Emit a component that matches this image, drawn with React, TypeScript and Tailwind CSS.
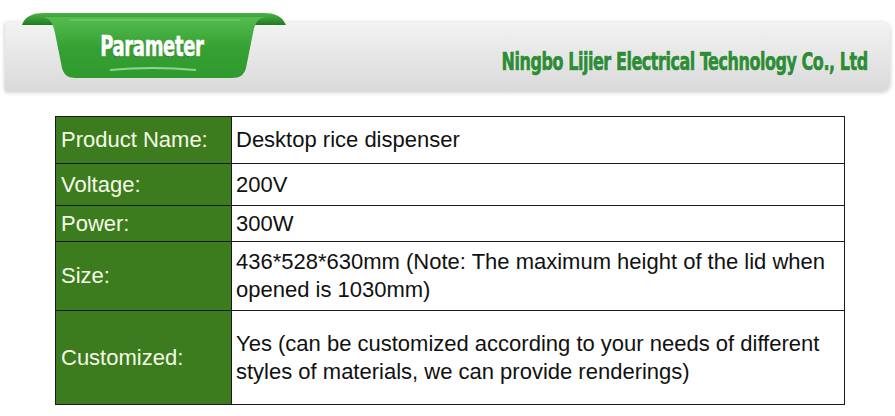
import React from "react";

const rows: { label: string; h: string; value: React.ReactNode }[] = [
  { label: "Product Name:", h: "h-[47px]", value: "Desktop rice dispenser" },
  { label: "Voltage:", h: "h-[42px]", value: "200V" },
  { label: "Power:", h: "h-[36px]", value: "300W" },
  {
    label: "Size:",
    h: "h-[69px]",
    value: (
      <>
        436*528*630mm (Note: The maximum height of the lid when
        <br />
        opened is 1030mm)
      </>
    ),
  },
  {
    label: "Customized:",
    h: "h-[94px]",
    value: (
      <>
        Yes (can be customized according to your needs of different
        <br />
        styles of materials, we can provide renderings)
      </>
    ),
  },
];

function Ribbon() {
  return (
    <div className="absolute left-0 top-0 flex h-[90px] w-[300px] justify-center pl-[4px] pt-[29px]">
      <svg width="300" height="90" viewBox="0 0 300 90" className="absolute left-0 top-0">
        <defs>
          <linearGradient id="rb" x1="0" y1="0" x2="0" y2="1">
            <stop offset="0" stopColor="#55bd4f" />
            <stop offset="0.5" stopColor="#36a033" />
            <stop offset="1" stopColor="#2f9a2d" />
          </linearGradient>
          <linearGradient id="curl" x1="0" y1="0" x2="0" y2="1">
            <stop offset="0" stopColor="#4db447" />
            <stop offset="1" stopColor="#1f7a1f" />
          </linearGradient>
        </defs>
        <path d="M22 25 C25 16 33 13 44 13 L264 13 C275 13 282 16 286 25 L22 25 Z" fill="url(#curl)" />
        <path
          d="M40 17 C50 17 53 23 55 33 L62 68 C64 75 68 78 76 78 L232 78 C240 78 244 75 246 68 L253 33 C255 23 258 17 268 17 Z"
          fill="url(#rb)"
        />
        <path d="M70 20 L240 20" stroke="#9fe09a" strokeWidth="1" opacity="0.6" />
        <path d="M110 70 Q152 66 196 70" stroke="#b6efae" strokeWidth="2" fill="none" opacity="0.7" />
      </svg>
      <span className="relative h-fit scale-x-[0.69] whitespace-nowrap font-['DejaVu_Sans_Condensed','Liberation_Sans',sans-serif] text-[29px] font-bold leading-[34px] tracking-[-0.5px] text-white [-webkit-text-stroke:0.6px_#fff] [text-shadow:0_1px_1px_rgba(0,0,0,0.3)]">
        Parameter
      </span>
    </div>
  );
}

export default function App() {
  return (
    <div className="h-[416px] w-[895px] bg-white font-['Liberation_Sans',Arial,sans-serif]">
      <div className="relative h-[110px] pl-[5px] pt-[22px]">
        <div className="flex h-[69px] w-[885px] items-center justify-end rounded-r-[8px] bg-gradient-to-b from-[#f3f3f3] via-[#e6e6e6] to-[#dadada] pr-[22px] pt-[10px] shadow-[0_1px_4px_rgba(0,0,0,0.25)]">
          <span className="origin-right scale-x-[0.74] whitespace-nowrap font-['DejaVu_Sans_Condensed','Liberation_Sans',sans-serif] text-[24px] font-bold tracking-[-0.6px] text-[#2e8b36] [-webkit-text-stroke:0.7px_#2e8b36] [text-shadow:0_0_2px_#fff,0_0_2px_#fff]">
            Ningbo Lijier Electrical Technology Co., Ltd
          </span>
        </div>
        <Ribbon />
      </div>
      <table className="ml-[55px] mt-[6px] w-[790px] border-collapse text-[22px] leading-[28px]">
        <tbody>
          {rows.map((r) => (
            <tr key={r.label} className={r.h}>
              <td className="w-[176px] border border-[#1b1b1b] bg-[#3d7c1e] px-[5px] align-middle text-[#f4fae6]">
                {r.label}
              </td>
              <td className="border border-[#1b1b1b] px-[4px] align-middle text-[#111]">{r.value}</td>
            </tr>
          ))}
        </tbody>
      </table>
    </div>
  );
}
